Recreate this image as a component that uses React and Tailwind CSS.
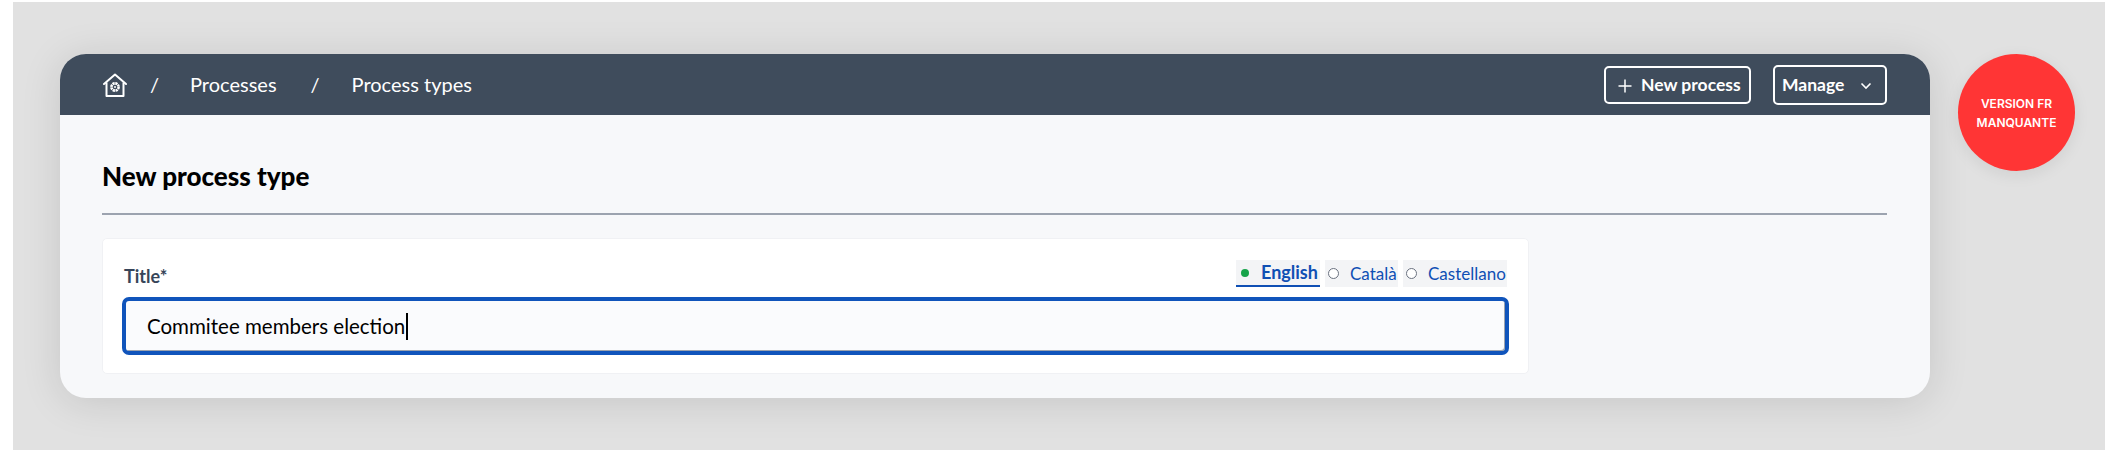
const font = '"Lato", "Noto Sans", sans-serif';

function HomeIcon() {
  return (
    <svg width="24" height="24" viewBox="0 0 24 24" fill="none" stroke="white" strokeWidth="2" className="shrink-0">
      <path d="M1 11 L12 1.5 L23 11" strokeLinecap="round" strokeLinejoin="round" />
      <path d="M3.5 9.5 V23 H20.5 V9.5" strokeLinejoin="round" />
      <circle cx="12" cy="14" r="3.6" strokeWidth="2.6" strokeDasharray="2.2 0.6" />
      <circle cx="12" cy="14" r="1" fill="white" stroke="none" />
    </svg>
  );
}

function LangTab({ label, active, width }) {
  return (
    <div className={`h-[27px] flex items-center bg-[#f3f4f6] text-[#0f4fb4] ${width} ${active ? 'text-[18px] font-bold border-b-2 border-[#0f4fb4] pl-[4px] gap-[12px]' : 'text-[17px] pl-[3px] gap-[11px]'}`}>
      {active ? (
        <span className="w-[8px] h-[8px] shrink-0 rounded-full bg-[#16a34a] ml-[1px]" />
      ) : (
        <span className="w-[11px] h-[11px] shrink-0 rounded-full border-[1.5px] border-[#6b7280] bg-white" />
      )}
      <span className="whitespace-nowrap">{label}</span>
    </div>
  );
}

export default function App() {
  return (
    <div className="w-[2105px] h-[465px] bg-white pt-[2px] pl-[13px] overflow-hidden" style={{ fontFamily: font }}>
      <div className="w-[2092px] h-[448px] bg-[#e1e1e1] flex items-start pt-[52px] pl-[47px]">
        <div className="w-[1870px] h-[344px] rounded-[26px] bg-[#f7f8fa] shadow-[0_4px_40px_rgba(0,0,0,0.12)] overflow-hidden shrink-0">
          <header className="h-[61px] bg-[#3f4c5c] flex items-center pl-[43px] pr-[43px] text-white text-[20px]">
            <HomeIcon />
            <span className="ml-[23px] mb-[2px]">/</span>
            <span className="ml-[31px] mb-[2px]">Processes</span>
            <span className="ml-[34px] mb-[2px]">/</span>
            <span className="ml-[32px] mb-[2px]">Process types</span>
            <div className="ml-auto flex items-center gap-[22px]">
              <button className="w-[147px] h-[38px] rounded-[5px] border-2 border-white flex items-center pl-[11px] pt-[2px] gap-[8px] text-[17.5px] font-bold">
                <svg width="16" height="16" viewBox="0 0 16 16" stroke="white" strokeWidth="1.5" fill="none"><path d="M8 1.5V14.5M1.5 8H14.5" /></svg>
                <span className="whitespace-nowrap">New process</span>
              </button>
              <button className="w-[114px] h-[40px] rounded-[5px] border-2 border-white flex items-center pl-[7px] pt-[2px] text-[17.5px] font-bold">
                <span>Manage</span>
                <svg width="12" height="8" viewBox="0 0 12 8" stroke="white" strokeWidth="1.6" fill="none" className="ml-[16px]"><path d="M1.5 1.5L6 6L10.5 1.5" /></svg>
              </button>
            </div>
          </header>
          <div className="pl-[42px] pr-[43px] pt-[46px]">
            <h1 className="text-[26px] leading-[30px] font-black text-black">New process type</h1>
            <div className="h-[2px] bg-[#9ca3af] mt-[22px]" />
            <div className="mt-[23px] w-[1427px] h-[136px] bg-white rounded-[5px] border border-[#f0f1f4] pl-[19px] pr-[19px] pt-[21px]">
              <div className="flex items-start justify-between">
                <label className="text-[18px] leading-[24px] font-bold text-[#374559] mt-[4px] ml-[2px]">Title*</label>
                <div className="flex gap-[5px] pr-[2px]">
                  <LangTab label="English" active width="w-[84px]" />
                  <LangTab label="Català" width="w-[73px]" />
                  <LangTab label="Castellano" width="w-[104px]" />
                </div>
              </div>
              <div className="mt-[9px] h-[58px] rounded-[7px] border-[4px] border-[#1054bb] bg-[#fafbfd] flex items-center pl-[21px] text-[20.5px] text-black shadow-[inset_-1px_-1px_0_#9ca3af]">
                <span className="whitespace-nowrap">Commitee members election</span>
                <span className="w-[2px] h-[27px] bg-black ml-[1px]" />
              </div>
            </div>
          </div>
        </div>
        <div className="ml-[28px] w-[117px] h-[117px] shrink-0 rounded-full bg-[#ff3535] shadow-[0_4px_16px_rgba(0,0,0,0.08)] flex items-center justify-center text-center text-white text-[12px] leading-[19px] font-semibold" style={{ fontFamily: '"Inter", sans-serif' }}>
          <span>VERSION FR<br />MANQUANTE</span>
        </div>
      </div>
    </div>
  );
}
